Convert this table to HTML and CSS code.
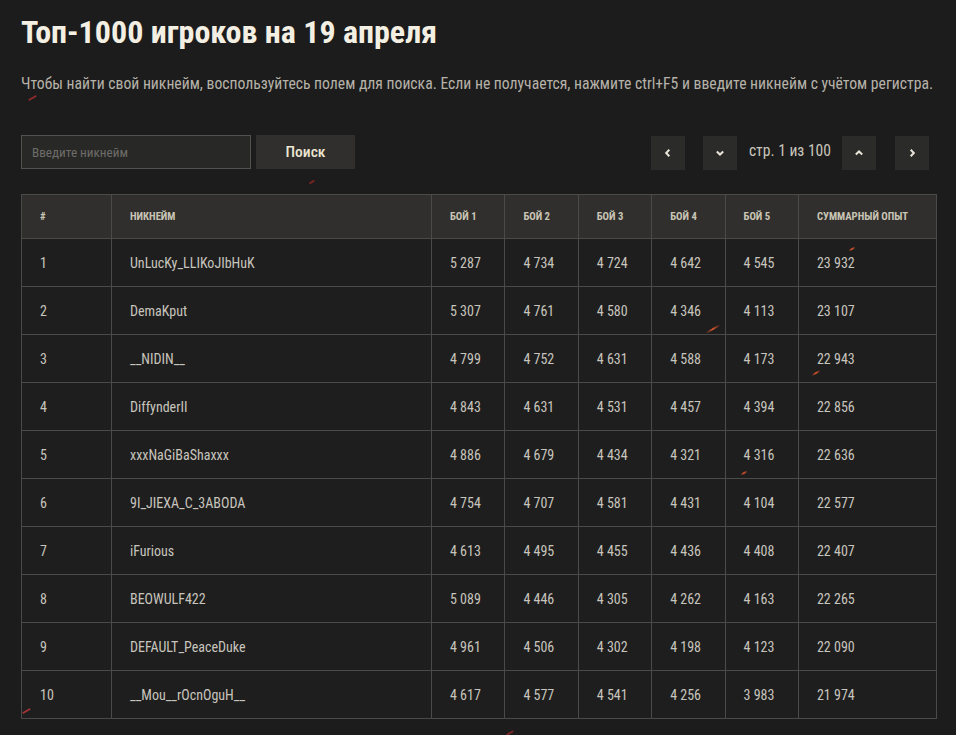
FILE: index.html
```html
<!DOCTYPE html>
<html lang="ru">
<head>
<meta charset="utf-8">
<title>Топ-1000 игроков</title>
<link rel="stylesheet" href="styles.css">
</head>
<body>
<div class="page">
  <span class="spark s1"></span><span class="spark s2"></span><span class="spark s3"></span><span class="spark s4"></span><span class="spark s5"></span><span class="spark s6"></span><span class="spark s7"></span><span class="spark s8"></span>
  <h1 class="title">Топ-1000 игроков на 19 апреля</h1>
  <p class="lead">Чтобы найти свой никнейм, воспользуйтесь полем для поиска. Если не получается, нажмите ctrl+F5 и введите никнейм с учётом регистра.</p>
  <div class="toolbar">
    <div class="search">
      <input class="search-input" type="text" placeholder="Введите никнейм">
      <button class="search-btn">Поиск</button>
    </div>
    <div class="pager">
      <button class="pbtn"><svg width="10" height="10" viewBox="0 0 10 10"><path d="M6.3 1.8 L3.2 5 L6.3 8.2" fill="none" stroke="#e8e4d8" stroke-width="2"/></svg></button>
      <button class="pbtn gap-left"><svg width="10" height="10" viewBox="0 0 10 10"><path d="M1.8 3.6 L5 6.6 L8.2 3.6" fill="none" stroke="#e8e4d8" stroke-width="2"/></svg></button>
      <span class="pinfo">стр. 1 из 100</span>
      <button class="pbtn"><svg width="10" height="10" viewBox="0 0 10 10"><path d="M1.8 6.4 L5 3.4 L8.2 6.4" fill="none" stroke="#e8e4d8" stroke-width="2"/></svg></button>
      <button class="pbtn gap-left2"><svg width="10" height="10" viewBox="0 0 10 10"><path d="M3.7 1.8 L6.8 5 L3.7 8.2" fill="none" stroke="#e8e4d8" stroke-width="2"/></svg></button>
    </div>
  </div>
  <table class="rating">
    <colgroup>
      <col class="c-num"><col class="c-nick"><col class="c-b"><col class="c-b"><col class="c-b"><col class="c-b"><col class="c-b"><col class="c-sum">
    </colgroup>
    <thead>
      <tr><th>#</th><th>Никнейм</th><th>Бой 1</th><th>Бой 2</th><th>Бой 3</th><th>Бой 4</th><th>Бой 5</th><th>Суммарный опыт</th></tr>
    </thead>
    <tbody>
      <tr><td>1</td><td>UnLucKy_LLIKoJIbHuK</td><td>5 287</td><td>4 734</td><td>4 724</td><td>4 642</td><td>4 545</td><td>23 932</td></tr>
      <tr><td>2</td><td>DemaKput</td><td>5 307</td><td>4 761</td><td>4 580</td><td>4 346</td><td>4 113</td><td>23 107</td></tr>
      <tr><td>3</td><td>__NIDIN__</td><td>4 799</td><td>4 752</td><td>4 631</td><td>4 588</td><td>4 173</td><td>22 943</td></tr>
      <tr><td>4</td><td>DiffynderII</td><td>4 843</td><td>4 631</td><td>4 531</td><td>4 457</td><td>4 394</td><td>22 856</td></tr>
      <tr><td>5</td><td>xxxNaGiBaShaxxx</td><td>4 886</td><td>4 679</td><td>4 434</td><td>4 321</td><td>4 316</td><td>22 636</td></tr>
      <tr><td>6</td><td>9I_JIEXA_C_3ABODA</td><td>4 754</td><td>4 707</td><td>4 581</td><td>4 431</td><td>4 104</td><td>22 577</td></tr>
      <tr><td>7</td><td>iFurious</td><td>4 613</td><td>4 495</td><td>4 455</td><td>4 436</td><td>4 408</td><td>22 407</td></tr>
      <tr><td>8</td><td>BEOWULF422</td><td>5 089</td><td>4 446</td><td>4 305</td><td>4 262</td><td>4 163</td><td>22 265</td></tr>
      <tr><td>9</td><td>DEFAULT_PeaceDuke</td><td>4 961</td><td>4 506</td><td>4 302</td><td>4 198</td><td>4 123</td><td>22 090</td></tr>
      <tr><td>10</td><td>__Mou__rOcnOguH__</td><td>4 617</td><td>4 577</td><td>4 541</td><td>4 256</td><td>3 983</td><td>21 974</td></tr>
    </tbody>
  </table>
</div>
</body>
</html>
```
FILE: styles.css
```css
* { box-sizing: border-box; }
html, body { margin: 0; padding: 0; background: #1c1c1d; }
body {
  font-family: "Roboto", "Liberation Sans", sans-serif;
  font-stretch: condensed;
  color: #c5c2ba;
  width: 956px;
  height: 735px;
  overflow: hidden;
}
.page {
  position: relative;
  padding: 13px 20px 0 21px;
}
.title {
  margin: 0;
  font-size: 32px;
  line-height: 38px;
  font-weight: 700;
  color: #f3efe2;
}
.lead {
  margin: 24px 0 0;
  font-size: 15.7px;
  line-height: 18px;
  color: #b6b2a8;
  white-space: nowrap;
}
.toolbar {
  display: flex;
  justify-content: space-between;
  align-items: flex-start;
  margin-top: 42px;
  padding-right: 7px;
}
.search { display: flex; gap: 5px; }
.search-input {
  width: 230px;
  height: 34px;
  background: #282827;
  border: 1px solid #515150;
  color: #ccc;
  padding: 0 10px;
  font-family: inherit;
  font-stretch: condensed;
  font-size: 13.2px;
  outline: none;
}
.search-input::placeholder { color: #6e6c68; }
.search-btn {
  width: 99px;
  height: 34px;
  background: #302f2d;
  border: 0;
  color: #ece6d2;
  font-family: inherit;
  font-stretch: condensed;
  font-size: 15.5px;
  font-weight: 500;
  cursor: pointer;
}
.pager { display: flex; align-items: center; margin-top: 1px; margin-bottom: -1px; }
.pbtn {
  width: 34px;
  height: 34px;
  background: #2b2b2a;
  border: 0;
  padding: 0;
  display: flex;
  align-items: center;
  justify-content: center;
  cursor: pointer;
}
.gap-left { margin-left: 18px; }
.gap-left2 { margin-left: 19px; }
.pinfo {
  font-size: 15.6px;
  color: #c9c5ba;
  margin: 0 11px 0 12px;
  position: relative;
  top: -2px;
}
.rating {
  margin-top: 25px;
  width: 915px;
  border-collapse: collapse;
  table-layout: fixed;
  font-size: 14px;
}
.c-num { width: 90px; }
.c-nick { width: 320px; }
.c-b { width: 73.4px; }
.c-sum { width: 138px; }
.rating th, .rating td {
  border: 1px solid #4a4a49;
  text-align: left;
  padding: 0 0 0 18px;
  white-space: nowrap;
}
.rating th {
  height: 44px;
  background: #302f2d;
  font-size: 10.7px;
  font-weight: 700;
  color: #c9c5b5;
  text-transform: uppercase;
}
.rating td {
  height: 48px;
  background: #1e1e1f;
  color: #c8c5bd;
}
.spark {
  position: absolute;
  height: 2px;
  border-radius: 1px;
  background: linear-gradient(90deg, rgba(220,70,30,0), #e0552a, rgba(220,70,30,0));
  transform: rotate(-30deg);
  z-index: 2;
  pointer-events: none;
}
.s1 { left: 28px; top: 97px; width: 9px; background: #8e2b2b; }
.s2 { left: 309px; top: 181px; width: 6px; background: #7d2525; }
.s3 { left: 705px; top: 328px; width: 16px; }
.s4 { left: 811px; top: 372px; width: 10px; }
.s5 { left: 740px; top: 472px; width: 8px; }
.s6 { left: 22px; top: 710px; width: 9px; background: #a33434; }
.s7 { left: 506px; top: 732px; width: 8px; background: #7d2525; }
.s8 { left: 848px; top: 248px; width: 8px; }
```
